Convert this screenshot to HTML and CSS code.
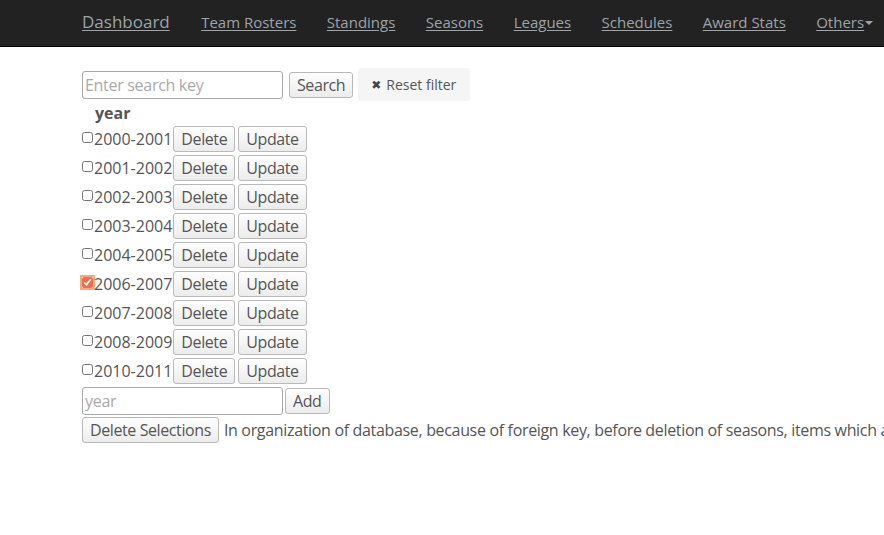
FILE: index.html
```
<!DOCTYPE html>
<html>
<head>
<meta charset="utf-8">
<link rel="stylesheet" href="styles.css">
</head>
<body>
<nav class="navbar">
  <a class="brand" href="#">Dashboard</a>
  <a class="nav-link" href="#">Team Rosters</a>
  <a class="nav-link" href="#">Standings</a>
  <a class="nav-link" href="#">Seasons</a>
  <a class="nav-link" href="#">Leagues</a>
  <a class="nav-link" href="#">Schedules</a>
  <a class="nav-link" href="#">Award Stats</a>
  <a class="nav-link" href="#">Others<span class="caret"></span></a>
</nav>
<main class="content">
  <div class="search-row">
    <input class="text-input" type="text" placeholder="Enter search key">
    <button class="btn">Search</button>
    <span class="reset"><span class="x">✖</span>Reset filter</span>
  </div>
  <div class="header">year</div>
  <div class="row"><input type="checkbox" class="cb"><span class="yr">2000-2001</span><button class="btn">Delete</button><button class="btn">Update</button></div>
  <div class="row"><input type="checkbox" class="cb"><span class="yr">2001-2002</span><button class="btn">Delete</button><button class="btn">Update</button></div>
  <div class="row"><input type="checkbox" class="cb"><span class="yr">2002-2003</span><button class="btn">Delete</button><button class="btn">Update</button></div>
  <div class="row"><input type="checkbox" class="cb"><span class="yr">2003-2004</span><button class="btn">Delete</button><button class="btn">Update</button></div>
  <div class="row"><input type="checkbox" class="cb"><span class="yr">2004-2005</span><button class="btn">Delete</button><button class="btn">Update</button></div>
  <div class="row"><input type="checkbox" class="cb checked" checked><span class="yr">2006-2007</span><button class="btn">Delete</button><button class="btn">Update</button></div>
  <div class="row"><input type="checkbox" class="cb"><span class="yr">2007-2008</span><button class="btn">Delete</button><button class="btn">Update</button></div>
  <div class="row"><input type="checkbox" class="cb"><span class="yr">2008-2009</span><button class="btn">Delete</button><button class="btn">Update</button></div>
  <div class="row"><input type="checkbox" class="cb"><span class="yr">2010-2011</span><button class="btn">Delete</button><button class="btn">Update</button></div>
  <div class="add-row">
    <input class="text-input small" type="text" placeholder="year">
    <button class="btn">Add</button>
  </div>
  <div class="footer-row">
    <button class="btn">Delete Selections</button>
    <span class="note">In organization of database, because of foreign key, before deletion of seasons, items which are related to the seasons should be deleted first.</span>
  </div>
</main>
</body>
</html>
```
FILE: styles.css
```
html, body {
  margin: 0;
  padding: 0;
  background: #fff;
  overflow: hidden;
}
body {
  font-family: "Open Sans", "DejaVu Sans", sans-serif;
  color: #555;
  font-size: 16px;
}
.navbar {
  height: 46px;
  box-sizing: content-box;
  background: #222;
  border-bottom: 1px solid #080808;
  display: flex;
  align-items: center;
  padding-left: 82px;
  gap: 30.4px;
  white-space: nowrap;
}
.navbar a {
  color: #9da3ab;
  text-decoration: underline;
  text-underline-offset: 2px;
  margin-bottom: 3px;
}
.brand {
  font-size: 17px;
  margin-right: 1px;
}
.nav-link {
  font-size: 15px;
}
.caret {
  display: inline-block;
  width: 0;
  height: 0;
  border-left: 4px solid transparent;
  border-right: 4px solid transparent;
  border-top: 4px solid #9da3ab;
  vertical-align: middle;
  margin-left: 1px;
}
.content {
  padding: 21px 0 0 82px;
}
.search-row {
  display: flex;
  align-items: center;
  height: 33px;
}
.text-input {
  box-sizing: border-box;
  width: 201px;
  height: 28px;
  border: 1px solid #a9a9a9;
  border-radius: 3px;
  font-family: inherit;
  font-size: 16px;
  letter-spacing: -0.3px;
  padding: 0 2px;
  color: #555;
  margin: 0;
}
.text-input::placeholder {
  color: #aaa;
}
.btn {
  box-sizing: border-box;
  height: 26px;
  font-family: inherit;
  font-size: 16px;
  letter-spacing: -0.4px;
  color: #555;
  background: linear-gradient(#fefefe, #ececec);
  border: 1px solid #b9b9b9;
  border-radius: 3px;
  padding: 0 7px;
  margin: 0;
  line-height: 22px;
}
.search-row .btn {
  margin-left: 6px;
}
.reset {
  margin-left: 5px;
  height: 33px;
  box-sizing: border-box;
  background: #f5f5f5;
  border-radius: 3px;
  display: inline-flex;
  align-items: center;
  padding: 0 14px 0 13px;
  font-size: 14px;
  color: #555;
}
.x {
  font-size: 12px;
  margin-right: 5px;
  color: #444;
}
.header {
  font-weight: bold;
  padding-left: 13px;
  height: 24px;
  line-height: 24px;
}
.row {
  display: flex;
  align-items: center;
  height: 28.9px;
  gap: 3px;
}
.cb {
  width: 11px;
  height: 11px;
  margin: 0 0 3px 0;
}
.cb.checked {
  accent-color: #e9714a;
  outline: 2px solid #f6a783;
  outline-offset: 0;
  border-radius: 2px;
}
.yr {
  margin-left: -2px;
  margin-right: -2px;
}
.add-row {
  display: flex;
  align-items: center;
  margin-top: 2px;
  height: 27px;
  gap: 2px;
}
.footer-row {
  display: flex;
  align-items: center;
  margin-top: 3px;
  height: 26px;
  white-space: nowrap;
}
.note {
  margin-left: 5px;
  font-size: 16px;
  letter-spacing: -0.33px;
}
```
